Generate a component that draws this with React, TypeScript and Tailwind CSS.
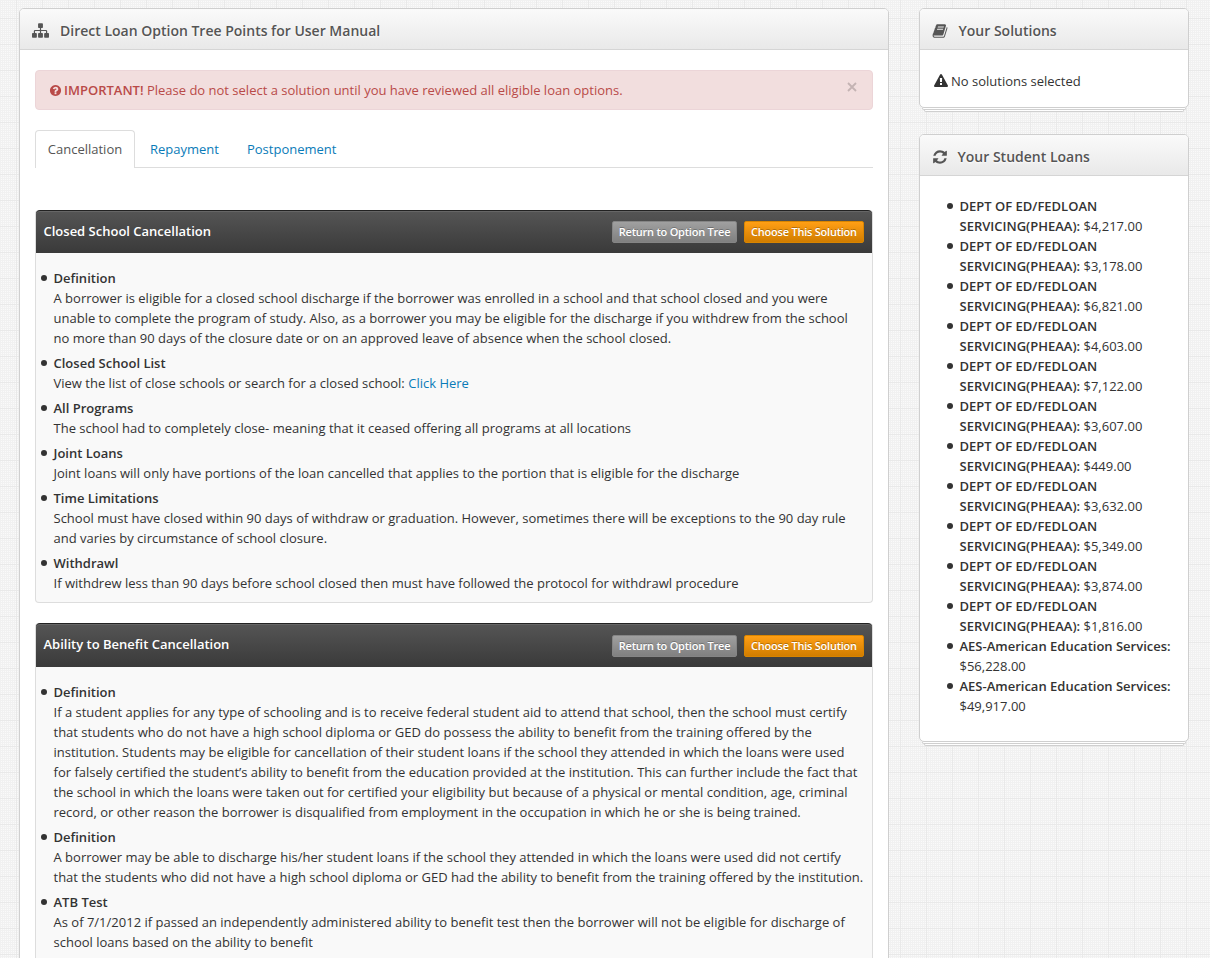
import React from "react";

const ICONS = {
  sitemap:
    "M1792 1248v320q0 40-28 68t-68 28h-320q-40 0-68-28t-28-68v-320q0-40 28-68t68-28h96v-192h-512v192h96q40 0 68 28t28 68v320q0 40-28 68t-68 28h-320q-40 0-68-28t-28-68v-320q0-40 28-68t68-28h96v-192h-512v192h96q40 0 68 28t28 68v320q0 40-28 68t-68 28h-320q-40 0-68-28t-28-68v-320q0-40 28-68t68-28h96v-192q0-52 38-90t90-38h512v-192h-96q-40 0-68-28t-28-68v-320q0-40 28-68t68-28h320q40 0 68 28t28 68v320q0 40-28 68t-68 28h-96v192h512q52 0 90 38t38 90v192h96q40 0 68 28t28 68z",
  book: "M1703 478q40 57 18 129l-275 906q-19 64-76.5 107.5t-122.5 43.5h-923q-77 0-148.5-53.5t-99.5-131.5q-24-67-2-127 0-4 3-27t4-37q1-8-3-21.5t-3-19.5q2-11 8-21t16.5-23.5 16.5-23.5q23-38 45-91.5t30-91.5q3-10 .5-30t-.5-28q3-11 17-28t17-23q21-36 42-92t25-90q1-9-2.5-32t.5-28q4-13 22-30.5t22-22.5q19-26 42.5-84.5t27.5-96.5q1-8-3-25.5t-2-26.5q2-8 9-18t18-23 17-21q8-12 16.5-30.5t15-35 16-36 19.5-32 26.5-23.5 36-11.5 47.5 5.5l-1 3q38-9 51-9h761q74 0 114 56t18 130l-274 906q-36 119-71.5 153.5t-128.5 34.5h-869q-27 0-38 15-11 16-1 43 24 70 144 70h923q29 0 56-15.5t35-41.5l300-987q7-22 5-57 38 15 59 43zm-1064 2q-4 13 2 22.5t20 9.5h608q13 0 25.5-9.5t16.5-22.5l21-64q4-13-2-22.5t-20-9.5h-608q-13 0-25.5 9.5t-16.5 22.5zm-83 256q-4 13 2 22.5t20 9.5h608q13 0 25.5-9.5t16.5-22.5l21-64q4-13-2-22.5t-20-9.5h-608q-13 0-25.5 9.5t-16.5 22.5z",
  refresh:
    "M1639 1056q0 5-1 7-64 268-268 434.5t-478 166.5q-146 0-282.5-55t-243.5-157l-129 129q-19 19-45 19t-45-19-19-45v-448q0-26 19-45t45-19h448q26 0 45 19t19 45-19 45l-137 137q71 66 161 102t187 36q134 0 250-65t186-179q11-17 53-117 8-23 30-23h192q13 0 22.5 9.5t9.5 22.5zm25-800v448q0 26-19 45t-45 19h-448q-26 0-45-19t-19-45 19-45l138-138q-148-137-349-137-134 0-250 65t-186 179q-11 17-53 117-8 23-30 23h-199q-13 0-22.5-9.5t-9.5-22.5v-7q65-268 270-434.5t480-166.5q146 0 284 55.5t245 156.5l130-129q19-19 45-19t45 19 19 45z",
  warning:
    "M1024 1375v-190q0-14-9.5-23.5t-22.5-9.5h-192q-13 0-22.5 9.5t-9.5 23.5v190q0 14 9.5 23.5t22.5 9.5h192q13 0 22.5-9.5t9.5-23.5zm-2-374l18-459q0-12-10-19-13-11-24-11h-220q-11 0-24 11-10 7-10 21l17 457q0 10 10 16.5t24 6.5h185q14 0 23.5-6.5t10.5-16.5zm-14-934l768 1408q35 63-2 126-17 29-46.5 46t-63.5 17h-1536q-34 0-63.5-17t-46.5-46q-37-63-2-126l768-1408q17-31 47-49t65-18 65 18 47 49z",
  question:
    "M1024 1376v-192q0-14-9-23t-23-9h-192q-14 0-23 9t-9 23v192q0 14 9 23t23 9h192q14 0 23-9t9-23zm256-672q0-88-55.5-163t-138.5-116-170-41q-243 0-371 213-15 24 8 42l132 100q7 6 19 6 16 0 25-12 53-68 86-92 34-24 86-24 48 0 85.5 26t37.5 59q0 38-20 61t-68 45q-63 28-115.5 86.5t-52.5 125.5v36q0 14 9 23t23 9h192q14 0 23-9t9-23q0-19 21.5-49.5t54.5-49.5q32-18 49-28.5t46-35 44.5-48 28-60.5 12.5-81zm384 192q0 209-103 385.5t-279.5 279.5-385.5 103-385.5-103-279.5-279.5-103-385.5 103-385.5 279.5-279.5 385.5-103 385.5 103 279.5 279.5 103 385.5z",
};

function Icon({ name, className }: { name: keyof typeof ICONS; className: string }) {
  return (
    <svg viewBox="0 0 1792 1792" fill="currentColor" className={`shrink-0 ${className}`}>
      <path d={ICONS[name]} />
    </svg>
  );
}

type Item = { title: string; lines: string[]; link?: string };

const closedSchool: Item[] = [
  {
    title: "Definition",
    lines: [
      "A borrower is eligible for a closed school discharge if the borrower was enrolled in a school and that school closed and you were",
      "unable to complete the program of study. Also, as a borrower you may be eligible for the discharge if you withdrew from the school",
      "no more than 90 days of the closure date or on an approved leave of absence when the school closed.",
    ],
  },
  { title: "Closed School List", lines: ["View the list of close schools or search for a closed school: "], link: "Click Here" },
  { title: "All Programs", lines: ["The school had to completely close- meaning that it ceased offering all programs at all locations"] },
  { title: "Joint Loans", lines: ["Joint loans will only have portions of the loan cancelled that applies to the portion that is eligible for the discharge"] },
  {
    title: "Time Limitations",
    lines: [
      "School must have closed within 90 days of withdraw or graduation. However, sometimes there will be exceptions to the 90 day rule",
      "and varies by circumstance of school closure.",
    ],
  },
  { title: "Withdrawl", lines: ["If withdrew less than 90 days before school closed then must have followed the protocol for withdrawl procedure"] },
];

const abilityToBenefit: Item[] = [
  {
    title: "Definition",
    lines: [
      "If a student applies for any type of schooling and is to receive federal student aid to attend that school, then the school must certify",
      "that students who do not have a high school diploma or GED do possess the ability to benefit from the training offered by the",
      "institution. Students may be eligible for cancellation of their student loans if the school they attended in which the loans were used",
      "for falsely certified the student’s ability to benefit from the education provided at the institution. This can further include the fact that",
      "the school in which the loans were taken out for certified your eligibility but because of a physical or mental condition, age, criminal",
      "record, or other reason the borrower is disqualified from employment in the occupation in which he or she is being trained.",
    ],
  },
  {
    title: "Definition",
    lines: [
      "A borrower may be able to discharge his/her student loans if the school they attended in which the loans were used did not certify",
      "that the students who did not have a high school diploma or GED had the ability to benefit from the training offered by the institution.",
    ],
  },
  {
    title: "ATB Test",
    lines: [
      "As of 7/1/2012 if passed an independently administered ability to benefit test then the borrower will not be eligible for discharge of",
      "school loans based on the ability to benefit",
    ],
  },
];

const fedLoans = ["4,217", "3,178", "6,821", "4,603", "7,122", "3,607", "449", "3,632", "5,349", "3,874", "1,816"];
const aesLoans = ["56,228", "49,917"];

function Bullet() {
  return <span className="mt-[7px] mr-[6.5px] h-[6px] w-[6px] shrink-0 rounded-full bg-[#333]" />;
}

function PanelHeader({ icon, iconClass, title }: { icon: keyof typeof ICONS; iconClass: string; title: string }) {
  return (
    <div className="flex h-[41px] items-center rounded-t-[4px] border-b border-[#d5d5d5] bg-linear-to-b from-[#fafafa] to-[#e9e9e9] pt-[3px] pl-[12px] text-[#555]">
      <Icon name={icon} className={iconClass} />
      <h3 className="text-[14px] leading-[18px] font-semibold whitespace-nowrap [text-shadow:0_1px_2px_#fff]">{title}</h3>
    </div>
  );
}

function StackEdge() {
  return (
    <>
      <div className="mx-[3px] h-[2px] rounded-b-[3px] border-x border-b border-[#cfcfcf] bg-white" />
      <div className="mx-[5px] h-[2px] rounded-b-[3px] border-x border-b border-[#cfcfcf] bg-white" />
    </>
  );
}

function Button({ children, className }: { children: React.ReactNode; className: string }) {
  return (
    <button
      className={`flex h-[22px] items-center justify-center rounded-[2px] border text-[11px] leading-[18px] font-semibold tracking-[-0.23px] whitespace-nowrap text-white [text-shadow:0_-1px_0_rgba(0,0,0,0.25)] ${className}`}
    >
      {children}
    </button>
  );
}

function Solution({
  title,
  items,
  className,
  headerClass,
}: {
  title: string;
  items: Item[];
  className: string;
  headerClass: string;
}) {
  return (
    <section className={`rounded-[4px] border border-t-0 border-[#ddd] bg-[#f9f9f9] ${className}`}>
      <header
        className={`flex items-start rounded-t-[4px] border-t border-[#222] bg-linear-to-b from-[#555] to-[#3a3a3a] pr-[8px] pl-[7.5px] shadow-[inset_0_1px_0_#666] ${headerClass}`}
      >
        <h4 className="mt-[10px] grow text-[13px] leading-[20px] font-semibold text-white">{title}</h4>
        <Button className="mr-[7px] w-[125px] border-[#858585] bg-linear-to-b from-[#a0a0a0] to-[#808080]">Return to Option Tree</Button>
        <Button className="w-[120px] border-[#d98500] bg-linear-to-b from-[#ff9f15] to-[#d17d00]">Choose This Solution</Button>
      </header>
      <ul className="flex flex-col gap-[5px] pt-[15px] pb-[9px] pl-[5px]">
        {items.map((item, i) => (
          <li key={i} className="flex">
            <Bullet />
            <div className="tracking-[0.005px] whitespace-nowrap">
              <strong className="block font-semibold">{item.title}</strong>
              {item.lines.map((line) => (
                <span key={line} className="block">
                  {line}
                  {item.link && <a className="text-[#0a7bb8]">{item.link}</a>}
                </span>
              ))}
            </div>
          </li>
        ))}
      </ul>
    </section>
  );
}

export default function App() {
  return (
    <div
      className="flex h-[958px] w-[1210px] items-start overflow-hidden bg-[#fafafa] pt-[8px] pl-[19px] font-['Open_Sans','Noto_Sans',sans-serif] text-[13px] leading-[20px] text-[#333] bg-[linear-gradient(90deg,#e9e9e9_1px,transparent_1px),linear-gradient(#e9e9e9_1px,transparent_1px),linear-gradient(90deg,#f1f1f1_1px,transparent_1px),linear-gradient(#f1f1f1_1px,transparent_1px)] bg-[length:26px_26px,26px_26px,2px_2px,2px_2px] bg-[position:16px_0,0_18px,0_0,0_0]"
    >
      <main className="h-[1000px] w-[870px] shrink-0 rounded-t-[5px] border border-[#cfcfcf] bg-white">
        <PanelHeader icon="sitemap" iconClass="mr-[11px] h-[17px] w-[17px]" title="Direct Loan Option Tree Points for User Manual" />
        <div className="px-[15px] pt-[20px]">
          <div className="flex h-[40px] items-center rounded-[4px] border border-[#ecd5d8] bg-[#f2dede] pr-[15px] pl-[12.5px] text-[#b94a48]">
            <Icon name="question" className="mr-[2.5px] h-[13px] w-[13px]" />
            <p className="grow whitespace-nowrap">
              <strong className="font-semibold">IMPORTANT!</strong> Please do not select a solution until you have reviewed all eligible loan options.
            </p>
            <svg viewBox="0 0 10 10" className="mb-[6px] h-[10px] w-[10px]" fill="none" stroke="#c4b3b3" strokeWidth="1.8">
              <path d="M1 1l8 8M9 1L1 9" />
            </svg>
          </div>
          <nav className="mt-[20px] flex h-[38px] border-b border-[#ddd]">
            <a className="-mb-px h-[38px] w-[100px] rounded-t-[4px] border border-b-0 border-[#ddd] bg-white pt-[8px] text-center text-[#555]">
              Cancellation
            </a>
            <a className="ml-[15px] pt-[9px] text-[#0a7bb8]">Repayment</a>
            <a className="ml-[28px] pt-[9px] text-[#0a7bb8]">Postponement</a>
          </nav>
          <Solution title="Closed School Cancellation" items={closedSchool} className="mt-[42px]" headerClass="h-[43px] [&>button]:mt-[10px]" />
          <Solution title="Ability to Benefit Cancellation" items={abilityToBenefit} className="mt-[20px]" headerClass="h-[44px] [&>button]:mt-[11px]" />
        </div>
      </main>

      <aside className="ml-[30px] w-[270px] shrink-0">
        <section>
          <div className="h-[100px] rounded-[5px] border border-[#cfcfcf] bg-white">
            <PanelHeader icon="book" iconClass="mr-[10.5px] h-[16px] w-[16px]" title="Your Solutions" />
            <div className="flex items-center pt-[21px] pl-[14px]">
              <Icon name="warning" className="mr-[3px] h-[14px] w-[14px]" />
              No solutions selected
            </div>
          </div>
          <StackEdge />
        </section>
        <section className="mt-[22px]">
          <div className="h-[608px] rounded-[5px] border border-[#cfcfcf] bg-white">
            <PanelHeader icon="refresh" iconClass="mr-[10px] -ml-[0.5px] h-[16px] w-[16px]" title="Your Student Loans" />
            <ul className="pt-[20px] pl-[27px]">
              {fedLoans.map((amount) => (
                <li key={amount} className="flex">
                  <Bullet />
                  <div className="whitespace-nowrap">
                    <strong className="block font-semibold">DEPT OF ED/FEDLOAN</strong>
                    <strong className="font-semibold">SERVICING(PHEAA):</strong> ${amount}.00
                  </div>
                </li>
              ))}
              {aesLoans.map((amount) => (
                <li key={amount} className="flex">
                  <Bullet />
                  <div className="whitespace-nowrap">
                    <strong className="block font-semibold">AES-American Education Services:</strong>${amount}.00
                  </div>
                </li>
              ))}
            </ul>
          </div>
          <StackEdge />
        </section>
      </aside>
    </div>
  );
}
